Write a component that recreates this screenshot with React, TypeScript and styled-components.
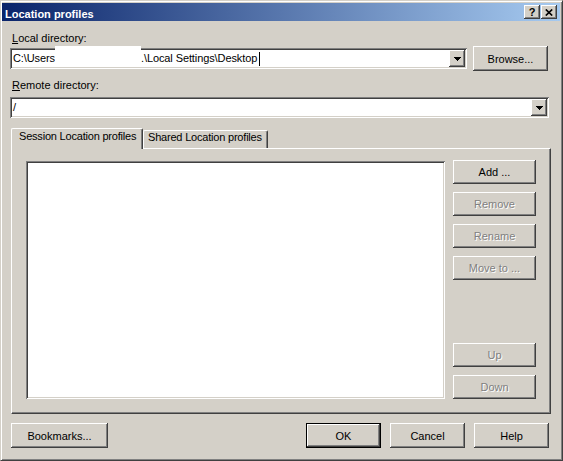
import React from 'react';
import styled, { createGlobalStyle, css } from 'styled-components';

const GlobalStyle = createGlobalStyle`
  html, body {
    margin: 0;
    padding: 0;
    background: #d4d0c8;
  }
  body {
    font-family: "Liberation Sans", Arial, sans-serif;
    font-size: 11px;
    color: #000;
  }
`;

// classic 3D edges
const raised = css`
  background: #d4d0c8;
  box-shadow: inset -1px -1px #404040, inset 1px 1px #ffffff, inset -2px -2px #808080,
    inset 2px 2px #d4d0c8;
`;

const sunken = css`
  box-shadow: inset 1px 1px #808080, inset -1px -1px #ffffff, inset 2px 2px #404040,
    inset -2px -2px #d4d0c8;
`;

const Window = styled.div`
  box-sizing: border-box;
  width: 563px;
  height: 461px;
  display: flex;
  flex-direction: column;
  padding: 2px 2px 0 1px;
  background: #d4d0c8;
  border: 1px solid;
  border-color: #d4d0c8 #404040 #404040 #d4d0c8;
  box-shadow: inset 1px 1px #ffffff, inset -1px -1px #808080;
`;

const TitleBar = styled.div`
  height: 18px;
  display: flex;
  align-items: center;
  padding: 0 3px;
  background: linear-gradient(to right, #0a246a, #a6caf0);
`;

const Title = styled.span`
  flex: 1;
  padding-top: 4px;
  line-height: 13px;
  color: #fff;
  font-weight: bold;
`;

const CaptionButton = styled.button<{ $gap?: number }>`
  ${raised};
  box-sizing: border-box;
  width: 16px;
  height: 14px;
  margin: 0 0 2px ${(p) => p.$gap ?? 0}px;
  align-self: flex-end;
  border: none;
  padding: 0;
  display: flex;
  align-items: center;
  justify-content: center;
  font: bold 11px "Liberation Sans", Arial, sans-serif;
  line-height: 12px;
  color: #000;
`;

const Body = styled.div`
  flex: 1;
  display: flex;
  flex-direction: column;
  padding: 0 9px;
`;

const FieldLabel = styled.label<{ $top: number }>`
  display: block;
  height: 13px;
  margin: ${(p) => p.$top}px 0 0 1px;
  line-height: 13px;
`;

const ComboRow = styled.div`
  display: flex;
  align-items: center;
  gap: 6px;
  margin: 1px 3px 0 -1px;
`;

const Combo = styled.div<{ $top?: number; $right?: number; $fill?: boolean }>`
  ${sunken};
  flex: ${(p) => (p.$fill ? '1 1 0' : 'none')};
  box-sizing: border-box;
  height: 21px;
  margin: ${(p) => p.$top ?? 0}px ${(p) => p.$right ?? 0}px 0 ${(p) => (p.$top ? -1 : 0)}px;
  padding: 2px;
  display: flex;
  background: #fff;
`;

const ComboText = styled.div`
  flex: 1;
  display: flex;
  align-items: center;
  padding-left: 1px;
  white-space: nowrap;
  line-height: 13px;
  letter-spacing: -0.1px;
`;

// blanked-out part of the path
const Blank = styled.span`
  position: relative;
  align-self: stretch;
  width: 86px;
  background: #fff;

  &::before {
    content: '';
    position: absolute;
    left: 0;
    right: 0;
    top: -4px;
    height: 4px;
    background: #fff;
  }
`;

const Caret = styled.span`
  width: 1px;
  height: 14px;
  margin-left: 2px;
  background: #000;
`;

const DropButton = styled.div`
  ${raised};
  width: 16px;
  height: 17px;
  display: flex;
  align-items: center;
  justify-content: center;
`;

const TabStrip = styled.div`
  position: relative;
  z-index: 1;
  display: flex;
  align-items: flex-end;
  height: 20px;
  margin-top: 10px;
`;

const Tab = styled.div<{ $active?: boolean; $width: number }>`
  box-sizing: border-box;
  width: ${(p) => p.$width}px;
  height: ${(p) => (p.$active ? 21 : 18)}px;
  margin-bottom: ${(p) => (p.$active ? -1 : 0)}px;
  padding: ${(p) => (p.$active ? '1px 0 0 7px' : '0 0 0 4px')};
  border-top: 1px solid #fff;
  border-left: 1px solid #fff;
  border-right: 1px solid #404040;
  border-radius: 2px 2px 0 0;
  box-shadow: inset -1px 0 #808080;
  background: #d4d0c8;
  line-height: 13px;
  letter-spacing: -0.2px;
  white-space: nowrap;
  overflow: hidden;
`;

const Panel = styled.div`
  box-sizing: border-box;
  height: 266px;
  display: flex;
  gap: 8px;
  padding: 12px 14px 14px 14px;
  border: 1px solid;
  border-color: #fff #404040 #404040 #fff;
  box-shadow: inset -1px -1px #808080;
`;

const ListBox = styled.div`
  ${sunken};
  flex: 1;
  background: #fff;
`;

const ButtonColumn = styled.div`
  width: 83px;
  margin-top: -1px;
  display: flex;
  flex-direction: column;
  justify-content: space-between;
`;

const ButtonGroup = styled.div`
  display: flex;
  flex-direction: column;
  gap: 8px;
`;

const Button = styled.button<{ $width?: number; $height?: number; $default?: boolean }>`
  ${raised};
  box-sizing: border-box;
  width: ${(p) => p.$width ?? 83}px;
  height: ${(p) => p.$height ?? 24}px;
  border: ${(p) => (p.$default ? '1px solid #000' : 'none')};
  padding: 0;
  font: 11px "Liberation Sans", Arial, sans-serif;
  color: #000;

  &:disabled {
    color: #808080;
    text-shadow: 1px 1px #fff;
  }
`;

const Footer = styled.div`
  display: flex;
  justify-content: space-between;
  margin: 9px 2px 0 0;
`;

const FooterGroup = styled.div`
  display: flex;
  gap: 9px;
`;

const Arrow = () => (
  <svg width="7" height="4" viewBox="0 0 7 4" shapeRendering="crispEdges">
    <rect x="0" y="0" width="7" height="1" fill="#000" />
    <rect x="1" y="1" width="5" height="1" fill="#000" />
    <rect x="2" y="2" width="3" height="1" fill="#000" />
    <rect x="3" y="3" width="1" height="1" fill="#000" />
  </svg>
);

const CloseGlyph = () => (
  <svg width="8" height="7" viewBox="0 0 8 7">
    <path d="M0.8 0.5 L7.2 6.5 M7.2 0.5 L0.8 6.5" stroke="#000" strokeWidth="1.7" />
  </svg>
);

const App: React.FC = () => (
  <>
    <GlobalStyle />
    <Window>
      <TitleBar>
        <Title>Location profiles</Title>
        <CaptionButton>?</CaptionButton>
        <CaptionButton $gap={1}>
          <CloseGlyph />
        </CaptionButton>
      </TitleBar>
      <Body>
        <FieldLabel $top={11}>
          <u>L</u>ocal directory:
        </FieldLabel>
        <ComboRow>
          <Combo $fill>
            <ComboText>
              C:\Users
              <Blank />
              .\Local Settings\Desktop
              <Caret />
            </ComboText>
            <DropButton>
              <Arrow />
            </DropButton>
          </Combo>
          <Button $width={75} $height={25}>
            Browse...
          </Button>
        </ComboRow>
        <FieldLabel $top={8}>
          <u>R</u>emote directory:
        </FieldLabel>
        <Combo $top={5} $right={2}>
          <ComboText>/</ComboText>
          <DropButton>
            <Arrow />
          </DropButton>
        </Combo>
        <TabStrip>
          <Tab $active $width={132}>
            Session Location profiles
          </Tab>
          <Tab $width={125}>Shared Location profiles</Tab>
        </TabStrip>
        <Panel>
          <ListBox />
          <ButtonColumn>
            <ButtonGroup>
              <Button>Add ...</Button>
              <Button disabled>Remove</Button>
              <Button disabled>Rename</Button>
              <Button disabled>Move to ...</Button>
            </ButtonGroup>
            <ButtonGroup>
              <Button disabled>Up</Button>
              <Button disabled>Down</Button>
            </ButtonGroup>
          </ButtonColumn>
        </Panel>
        <Footer>
          <Button $width={97} $height={25}>
            Bookmarks...
          </Button>
          <FooterGroup>
            <Button $width={75} $height={25} $default>
              OK
            </Button>
            <Button $width={75} $height={25}>
              Cancel
            </Button>
            <Button $width={75} $height={25}>
              Help
            </Button>
          </FooterGroup>
        </Footer>
      </Body>
    </Window>
  </>
);

export default App;
